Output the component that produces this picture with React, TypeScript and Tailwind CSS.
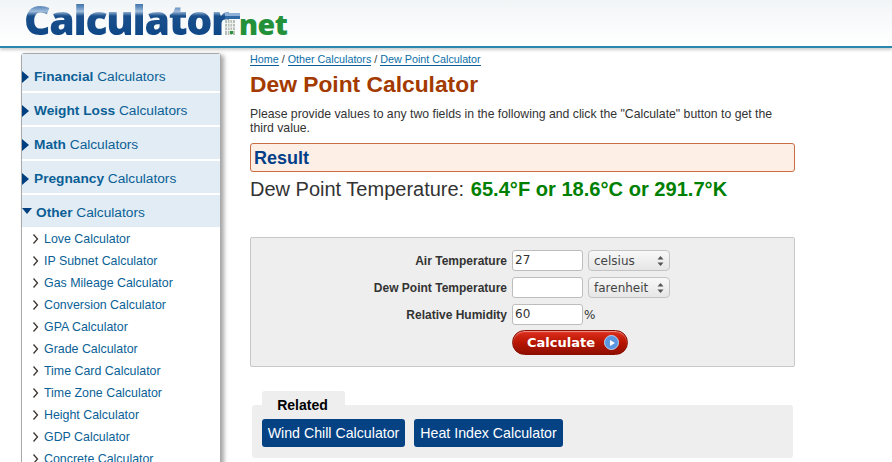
const topGroups = [
  { bold: 'Financial', first: true },
  { bold: 'Weight Loss' },
  { bold: 'Math' },
  { bold: 'Pregnancy' },
];

const otherLinks = [
  'Love Calculator',
  'IP Subnet Calculator',
  'Gas Mileage Calculator',
  'Conversion Calculator',
  'GPA Calculator',
  'Grade Calculator',
  'Time Card Calculator',
  'Time Zone Calculator',
  'Height Calculator',
  'GDP Calculator',
  'Concrete Calculator',
];

function Logo() {
  return (
    <div className="flex items-baseline h-[47px] pl-[24px] select-none">
      <span className="text-[41px] leading-[38px] font-extrabold tracking-[-1.3px] bg-[linear-gradient(180deg,#1d5592_0%,#5f8cbd_18%,#a0bcda_30%,#1a4f8c_42%,#0d4585_100%)] bg-clip-text text-transparent font-['Open_Sans',sans-serif]">
        Calculator
      </span>
      <svg width="15" height="22" viewBox="0 0 15 22" className="-ml-[4px] shrink-0">
        <rect width="15" height="3" fill="#8fb0d6" />
        <rect y="3" width="15" height="3" fill="#2f6aa5" />
        <rect y="7" width="10" height="15" fill="#b9c0b9" />
        <path d="M0 10.500h10M0 14h10M0 17.500h10M2.500 7v15M5 7v15M7.500 7v15" stroke="#eef0ee" strokeWidth="1" />
        <rect x="5" y="18" width="3" height="3" fill="#2a9438" />
      </svg>
      <span className="-ml-[1px] text-[28.500px] leading-[26px] font-extrabold tracking-[-0.5px] text-[#23913a] font-['Open_Sans',sans-serif]">net</span>
    </div>
  );
}

function GroupHeader({ bold, open, first }: { bold: string; open?: boolean; first?: boolean }) {
  return (
    <div className={`flex items-center mt-[2px] bg-[#e1ecf4] text-[13.7px] text-[#0b5f96] ${first ? 'h-[37px] pt-[10px]' : 'h-[32px] pt-[5px]'}`}>
      {open ? (
        <span className="mr-[4px] mb-[5px] w-0 h-0 border-x-[5.5px] border-x-transparent border-t-[6px] border-t-[#003f7f]" />
      ) : (
        <span className="mr-[5px] mb-[1px] w-0 h-0 border-y-[6px] border-y-transparent border-l-[7px] border-l-[#003f7f]" />
      )}
      <span>
        <b>{bold}</b> Calculators
      </span>
    </div>
  );
}

function Sidebar() {
  return (
    <aside className="w-[200px] ml-[21px] mt-[5px] shrink-0 h-[460px] border border-[#a9a9a9] rounded-t-[3px] bg-white shadow-[3px_2px_4px_rgba(0,0,0,0.35)]">
      <div className="-mt-[2px]">
        {topGroups.map((g) => (
          <GroupHeader key={g.bold} bold={g.bold} first={g.first} />
        ))}
        <GroupHeader bold="Other" open />
      </div>
      <ul className="pt-[1px]">
        {otherLinks.map((link) => (
          <li key={link} className="flex items-center h-[22px] text-[12.4px] text-[#0b5f96]">
            <svg width="7" height="10" viewBox="0 0 7 10" className="ml-[10px] mr-[5px] shrink-0">
              <path d="M1.500 0.500L5.500 5L1.500 9.500" fill="none" stroke="#3d3530" strokeWidth="1.300" />
            </svg>
            <span>{link}</span>
          </li>
        ))}
      </ul>
    </aside>
  );
}

function Crumb({ children }: { children: string }) {
  return <a className="text-[#0b6ea8] border-b border-[#0b5f96]">{children}</a>;
}

function FormRow({ label, value, unit }: { label: string; value: string; unit: string }) {
  return (
    <div className="flex items-center h-[27px]">
      <div className="w-[256px] text-right text-[12px] font-bold text-[#333]">{label}</div>
      <div className="ml-[5px] w-[71px] h-[21px] bg-white border border-[#bdbdbd] rounded-[3px] text-[12px] leading-[19px] pl-[2px] text-[#333] font-['DejaVu_Sans',sans-serif]">
        {value}
      </div>
      {unit === '%' ? (
        <span className="ml-[1px] text-[12px] text-[#333] font-['DejaVu_Sans',sans-serif]">%</span>
      ) : (
        <div className="ml-[5px] w-[82px] h-[21px] flex items-center justify-between pl-[5px] pr-[5px] bg-gradient-to-b from-[#f8f8f8] to-[#e6e6e6] border border-[#c4c4c4] rounded-[4px] text-[12px] text-[#444] font-['DejaVu_Sans',sans-serif]">
          {unit}
          <svg width="7" height="12" viewBox="0 0 7 12">
            <path d="M3.500 1L6.500 4.500H0.500zM3.500 11L0.500 7.500h6z" fill="#555" />
          </svg>
        </div>
      )}
    </div>
  );
}

function Main() {
  return (
    <main className="ml-[29px] w-[545px] pt-[4px] text-[#333]">
      <div className="text-[10.75px] leading-[14px] h-[16px] text-[#333]">
        <Crumb>Home</Crumb> / <Crumb>Other Calculators</Crumb> / <Crumb>Dew Point Calculator</Crumb>
      </div>
      <h1 className="mt-[3px] text-[22.8px] leading-[26px] font-bold text-[#a33a00]">Dew Point Calculator</h1>
      <p className="mt-[10px] text-[12.25px] leading-[14px]">
        Please provide values to any two fields in the following and click the "Calculate" button to get the third value.
      </p>
      <div className="mt-[8px] h-[29px] bg-[#fdeee6] border border-[#c96d42] rounded-[3px] pl-[3px] text-[18px] leading-[29px] font-bold text-[#003f88]">
        Result
      </div>
      <div className="mt-[6px] text-[20px] leading-[22px] text-[#333]">
        Dew Point Temperature: <b className="ml-[1px] text-[20.1px] text-[#008000]">65.4°F or 18.6°C or 291.7°K</b>
      </div>
      <div className="mt-[37px] h-[130px] bg-[#eeeeee] border border-[#c8c8c8] rounded-[2px] pt-[9px]">
        <FormRow label="Air Temperature" value="27" unit="celsius" />
        <FormRow label="Dew Point Temperature" value="" unit="farenheit" />
        <FormRow label="Relative Humidity" value="60" unit="%" />
        <div className="mt-[2px] ml-[261px] w-[116px] h-[25px] flex items-center gap-[9px] pl-[14px] rounded-full border border-[#8a0d00] bg-gradient-to-b from-[#e0301e] via-[#b81400] to-[#8f0f00] shadow-[inset_0_1px_1px_rgba(255,255,255,0.5)]">
          <span className="text-[13px] font-bold text-white font-['DejaVu_Sans',sans-serif]">Calculate</span>
          <span className="flex items-center justify-center w-[15px] h-[15px] rounded-full bg-[#5b97e0] border border-[#b9d4f2]">
            <span className="w-0 h-0 ml-[1px] border-y-[3.5px] border-y-transparent border-l-[5px] border-l-white" />
          </span>
        </div>
      </div>
      <div className="mt-[24px] ml-[12px] w-[83px] h-[14px] pr-[2px] bg-[#eeeeee] rounded-t-[3px] text-center text-[14px] leading-[28px] font-bold text-black">
        Related
      </div>
      <div className="ml-[2px] w-[541px] h-[53px] bg-[#eeeeee] rounded-[3px] pt-[14px] pl-[10px] flex gap-[9px]">
        <div className="h-[28px] w-[143px] text-center bg-[#044284] rounded-[3px] text-[14.2px] leading-[28px] text-white">Wind Chill Calculator</div>
        <div className="h-[28px] w-[149px] text-center bg-[#044284] rounded-[3px] text-[14.2px] leading-[28px] text-white">Heat Index Calculator</div>
      </div>
    </main>
  );
}

export default function App() {
  return (
    <div className="w-[892px] h-[462px] overflow-hidden bg-white font-['Liberation_Sans',Arial,sans-serif]">
      <header className="h-[48px] bg-gradient-to-b from-[#f2f5f7] to-white border-b-2 border-[#2a86ac] shadow-[0_2px_3px_rgba(0,0,0,0.2)]">
        <Logo />
      </header>
      <div className="flex">
        <Sidebar />
        <Main />
      </div>
    </div>
  );
}
